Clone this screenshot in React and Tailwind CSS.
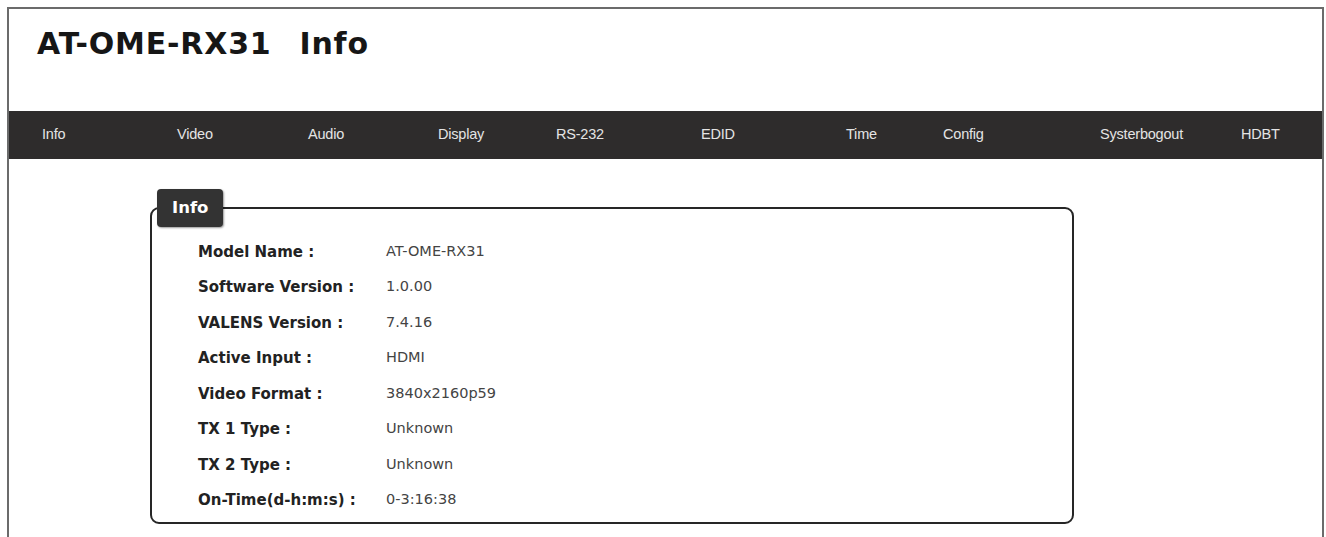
const navItems = [
  { label: 'Info', w: 'w-[135px]' },
  { label: 'Video', w: 'w-[131px]' },
  { label: 'Audio', w: 'w-[130px]' },
  { label: 'Display', w: 'w-[118px]' },
  { label: 'RS-232', w: 'w-[145px]' },
  { label: 'EDID', w: 'w-[145px]' },
  { label: 'Time', w: 'w-[97px]' },
  { label: 'Config', w: 'w-[157px]' },
  { label: 'Systerbogout', w: 'w-[141px]' },
  { label: 'HDBT', w: 'w-auto' },
];

const infoRows = [
  ['Model Name :', 'AT-OME-RX31'],
  ['Software Version :', '1.0.00'],
  ['VALENS Version :', '7.4.16'],
  ['Active Input :', 'HDMI'],
  ['Video Format :', '3840x2160p59'],
  ['TX 1 Type :', 'Unknown'],
  ['TX 2 Type :', 'Unknown'],
  ['On-Time(d-h:m:s) :', '0-3:16:38'],
];

function NavBar() {
  return (
    <nav className="h-[48px] bg-[#2e2c2c] flex items-center pl-[33px] font-['Liberation_Sans',Arial,sans-serif] text-[14.5px] text-[#e4e4e4] tracking-[-0.2px]">
      {navItems.map((item) => (
        <a key={item.label} className={`${item.w} shrink-0 cursor-pointer`}>
          {item.label}
        </a>
      ))}
    </nav>
  );
}

function InfoPanel() {
  return (
    <fieldset className="ml-[141px] w-[924px] h-[335px] border-2 border-[#262626] rounded-[9px] px-0 pb-0">
      <legend className="ml-[5px] px-[15px] h-[38px] flex items-center bg-[#333] text-white text-[16.5px] font-semibold rounded-[4px] shadow-[1px_1px_2px_rgba(0,0,0,0.4)]">
        Info
      </legend>
      <div className="pl-[46px] pt-[7px] flex flex-col">
        {infoRows.map(([label, value]) => (
          <div key={label} className="flex items-center h-[35.5px]">
            <span className="w-[188px] text-[15px] font-semibold text-[#222]">{label}</span>
            <span className="text-[14.5px] text-[#444]">{value}</span>
          </div>
        ))}
      </div>
    </fieldset>
  );
}

export default function App() {
  return (
    <div className="bg-white pt-[7px] pl-[7px] pr-[2px] font-['DejaVu_Sans',Verdana,sans-serif] overflow-hidden h-[537px]">
      <div className="border-2 border-[#6b6b6b] border-b-0 h-[600px]">
        <header className="h-[102px] pl-[28px] pt-[12px]">
          <h1 className="text-[30px] font-semibold text-[#161616] tracking-[0.8px]">
            AT-OME-RX31<span className="ml-[28px]">Info</span>
          </h1>
        </header>
        <NavBar />
        <div className="pt-[30px]">
          <InfoPanel />
        </div>
      </div>
    </div>
  );
}
